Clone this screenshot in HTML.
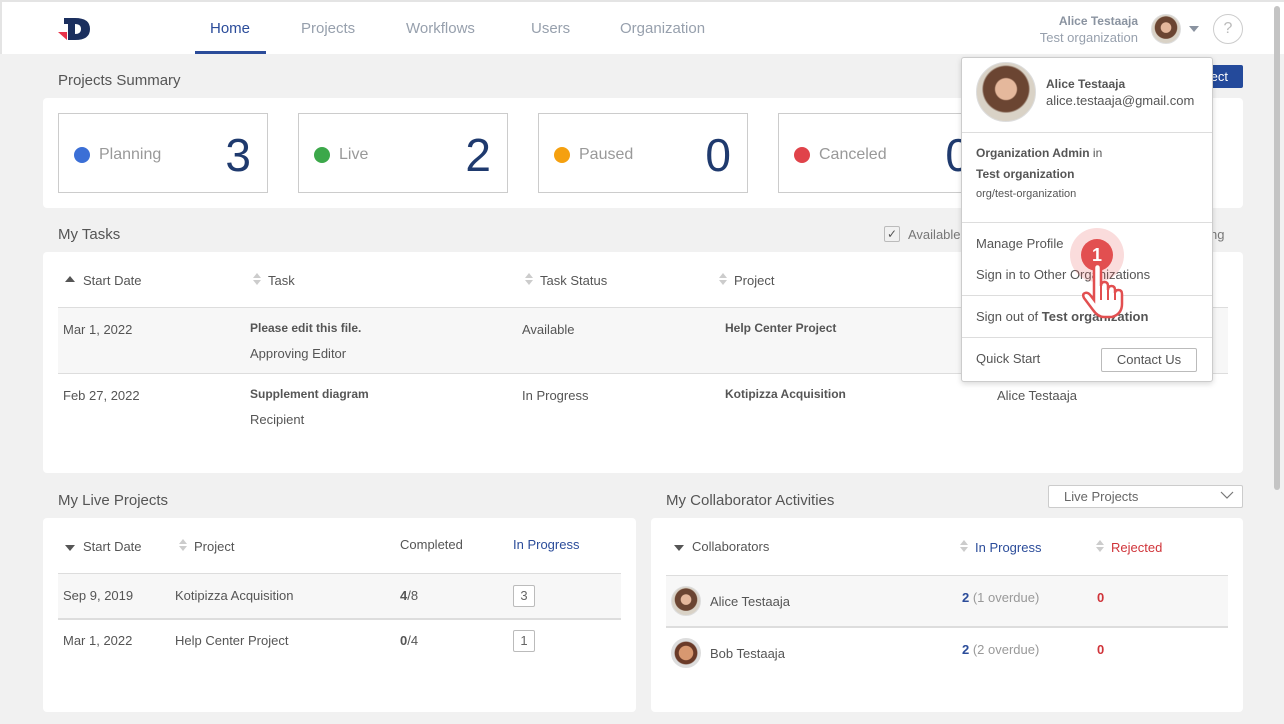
<!DOCTYPE html>
<html><head><meta charset="utf-8"><style>
*{box-sizing:border-box;margin:0;padding:0}
body{width:1284px;height:724px;overflow:hidden;background:#f1f1f1;font-family:"Liberation Sans",sans-serif;color:#555;position:relative;font-size:13px}
.a{position:absolute;white-space:nowrap}
.card{position:absolute;background:#fff;border-radius:4px}
.h2{font-size:15px;color:#555}
.tile{position:absolute;top:113px;width:210px;height:80px;border:1px solid #ccc;background:#fff}
.tile .dot{position:absolute;left:15px;top:33px;width:16px;height:16px;border-radius:50%}
.tile .lbl{position:absolute;left:40px;top:32px;font-size:16px;color:#999}
.tile .num{position:absolute;right:16px;top:14px;font-size:46px;color:#1f3a6e;font-weight:300}
.th{font-size:13px;color:#555}
.sort{display:inline-block;width:9px;height:14px;vertical-align:-2px;margin-right:6px;position:relative}
.sort:before{content:"";position:absolute;left:0;top:0;border:4.5px solid transparent;border-bottom:5px solid #ccc;border-top:0}
.sort:after{content:"";position:absolute;left:0;top:7px;border:4.5px solid transparent;border-top:5px solid #ccc;border-bottom:0}
.up{display:inline-block;border:5px solid transparent;border-bottom:6px solid #555;border-top:0;margin-right:8px;vertical-align:3px}
.dn{display:inline-block;border:5px solid transparent;border-top:6px solid #555;border-bottom:0;margin-right:8px;vertical-align:0}
.line{position:absolute;height:1px;background:#ddd}
b{color:#555}
.box{position:absolute;width:22px;height:22px;border:1px solid #bbb;border-radius:2px;text-align:center;line-height:20px;font-size:13px;color:#666;background:#fff}
.av{position:absolute;border-radius:50%;border:1px solid #ddd;background:radial-gradient(circle at 50% 45%,#e5b89c 0 24%,#6b4532 27% 52%,#d9d2c6 56%)}
</style></head><body>
<!-- header -->
<div class="a" style="left:0;top:0;width:1284px;height:54px;background:#fff;border-top:2px solid #e4e4e4;border-left:2px solid #e4e4e4"></div>
<svg class="a" style="left:56px;top:15px" width="38" height="28" viewBox="0 0 38 28"><polygon points="2,17 11,17 11,25" fill="#e8334a"/><path d="M8 3 H19 Q34 3 34 14 Q34 25 19 25 H12 V9 H8 Z M19 9 V19 Q25 19 25 14 Q25 9 19 9Z" fill="#1b2f5e" fill-rule="evenodd"/></svg>
<div class="a" style="left:210px;top:20px;font-size:15px;color:#2b4c9a">Home</div>
<div class="a" style="left:195px;top:51px;width:71px;height:3px;background:#2b4c9a"></div>
<div class="a" style="left:301px;top:20px;font-size:15px;color:#97a0ad">Projects</div>
<div class="a" style="left:406px;top:20px;font-size:15px;color:#97a0ad">Workflows</div>
<div class="a" style="left:531px;top:20px;font-size:15px;color:#97a0ad">Users</div>
<div class="a" style="left:620px;top:20px;font-size:15px;color:#97a0ad">Organization</div>
<div class="a" style="left:1030px;top:14px;width:108px;text-align:right;font-size:12px;font-weight:bold;color:#8a93a0">Alice Testaaja</div>
<div class="a" style="left:1020px;top:30px;width:118px;text-align:right;font-size:13px;color:#97a0ad">Test organization</div>
<div class="av" style="left:1151px;top:14px;width:30px;height:30px"></div>
<div class="a" style="left:1189px;top:26px;border:5px solid transparent;border-top:6px solid #8a93a0"></div>
<div class="a" style="left:1213px;top:14px;width:30px;height:30px;border:1px solid #ccc;border-radius:50%;text-align:center;line-height:28px;color:#bbb;font-size:16px">?</div>
<div class="a" style="left:1274px;top:6px;width:6px;height:484px;background:#c4c4c4;border-radius:3px"></div>

<!-- projects summary -->
<div class="a h2" style="left:58px;top:72px">Projects Summary</div>
<div class="a" style="left:1140px;top:65px;width:103px;height:23px;background:#244a9b;border-radius:2px;color:#fff;text-align:right;padding-right:15px;line-height:23px">New Project</div>
<div class="card" style="left:43px;top:98px;width:1200px;height:110px"></div>
<div class="tile" style="left:58px"><div class="dot" style="background:#3b6fd6"></div><div class="lbl">Planning</div><div class="num">3</div></div>
<div class="tile" style="left:298px"><div class="dot" style="background:#3ca84a"></div><div class="lbl">Live</div><div class="num">2</div></div>
<div class="tile" style="left:538px"><div class="dot" style="background:#f5a00f"></div><div class="lbl">Paused</div><div class="num">0</div></div>
<div class="tile" style="left:778px"><div class="dot" style="background:#e0434a"></div><div class="lbl">Canceled</div><div class="num">0</div></div>

<!-- my tasks -->
<div class="a h2" style="left:58px;top:226px">My Tasks</div>
<div class="a" style="left:884px;top:226px;width:16px;height:16px;border:1px solid #bbb;border-radius:2px;font-size:12px;line-height:14px;text-align:center;color:#555">✓</div>
<div class="a" style="left:908px;top:227px;color:#777">Available</div>
<div class="a" style="left:1210px;top:227px;color:#777">ng</div>
<div class="card" style="left:43px;top:252px;width:1200px;height:221px"></div>
<div class="a th" style="left:65px;top:273px"><span class="up"></span>Start Date</div>
<div class="a th" style="left:253px;top:273px"><span class="sort"></span>Task</div>
<div class="a th" style="left:525px;top:273px"><span class="sort"></span>Task Status</div>
<div class="a th" style="left:719px;top:273px"><span class="sort"></span>Project</div>
<div class="line" style="left:58px;top:307px;width:1170px"></div>
<div class="a" style="left:58px;top:308px;width:1170px;height:65px;background:#f7f7f7"></div>
<div class="line" style="left:58px;top:373px;width:1170px;background:#ddd"></div>
<div class="a" style="left:63px;top:322px">Mar 1, 2022</div>
<div class="a" style="left:250px;top:321px;font-size:12px;font-weight:bold">Please edit this file.</div>
<div class="a" style="left:250px;top:346px">Approving Editor</div>
<div class="a" style="left:522px;top:322px">Available</div>
<div class="a" style="left:725px;top:321px;font-size:12px;font-weight:bold">Help Center Project</div>
<div class="a" style="left:63px;top:388px">Feb 27, 2022</div>
<div class="a" style="left:250px;top:387px;font-size:12px;font-weight:bold">Supplement diagram</div>
<div class="a" style="left:250px;top:412px">Recipient</div>
<div class="a" style="left:522px;top:388px">In Progress</div>
<div class="a" style="left:725px;top:387px;font-size:12px;font-weight:bold">Kotipizza Acquisition</div>
<div class="a" style="left:997px;top:388px">Alice Testaaja</div>

<!-- live projects -->
<div class="a h2" style="left:58px;top:492px">My Live Projects</div>
<div class="card" style="left:43px;top:518px;width:593px;height:194px"></div>
<div class="a th" style="left:65px;top:539px"><span class="dn"></span>Start Date</div>
<div class="a th" style="left:179px;top:539px"><span class="sort"></span>Project</div>
<div class="a th" style="left:400px;top:537px">Completed</div>
<div class="a th" style="left:513px;top:537px;color:#2b4c9a">In Progress</div>
<div class="line" style="left:58px;top:573px;width:563px"></div>
<div class="a" style="left:58px;top:574px;width:563px;height:44px;background:#f7f7f7"></div>
<div class="line" style="left:58px;top:618px;width:563px;height:2px"></div>
<div class="a" style="left:63px;top:588px">Sep 9, 2019</div>
<div class="a" style="left:175px;top:588px">Kotipizza Acquisition</div>
<div class="a" style="left:400px;top:588px"><b>4</b>/8</div>
<div class="box" style="left:513px;top:585px">3</div>
<div class="a" style="left:63px;top:633px">Mar 1, 2022</div>
<div class="a" style="left:175px;top:633px">Help Center Project</div>
<div class="a" style="left:400px;top:633px"><b>0</b>/4</div>
<div class="box" style="left:513px;top:630px">1</div>

<!-- collaborators -->
<div class="a h2" style="left:666px;top:492px">My Collaborator Activities</div>
<div class="a" style="left:1048px;top:485px;width:195px;height:23px;background:#fff;border:1px solid #ccc;border-radius:2px;padding-left:15px;line-height:21px;color:#666">Live Projects</div>
<svg class="a" style="left:1220px;top:491px" width="14" height="9"><path d="M1 1 L7 7 L13 1" fill="none" stroke="#777" stroke-width="1.2"/></svg>
<div class="card" style="left:651px;top:518px;width:592px;height:194px"></div>
<div class="a th" style="left:674px;top:539px"><span class="dn"></span>Collaborators</div>
<div class="a th" style="left:960px;top:540px;color:#2b4c9a"><span class="sort"></span>In Progress</div>
<div class="a th" style="left:1096px;top:540px;color:#d0343a"><span class="sort"></span>Rejected</div>
<div class="line" style="left:666px;top:575px;width:562px"></div>
<div class="a" style="left:666px;top:576px;width:562px;height:50px;background:#f7f7f7"></div>
<div class="line" style="left:666px;top:626px;width:562px;height:2px"></div>
<div class="av" style="left:671px;top:586px;width:30px;height:30px"></div>
<div class="a" style="left:710px;top:594px">Alice Testaaja</div>
<div class="a" style="left:962px;top:590px;color:#999"><b style="color:#2b4c9a">2</b> (1 overdue)</div>
<div class="a" style="left:1097px;top:590px;color:#d0343a;font-weight:bold">0</div>
<div class="av" style="left:671px;top:638px;width:30px;height:30px;background:radial-gradient(circle at 50% 50%,#d89870 0 35%,#6a3a28 38% 55%,#ddd 60%)"></div>
<div class="a" style="left:710px;top:646px">Bob Testaaja</div>
<div class="a" style="left:962px;top:642px;color:#999"><b style="color:#2b4c9a">2</b> (2 overdue)</div>
<div class="a" style="left:1097px;top:642px;color:#d0343a;font-weight:bold">0</div>

<!-- dropdown -->
<div class="a" style="left:961px;top:57px;width:252px;height:325px;background:#fff;border:1px solid #ccc;border-radius:3px;box-shadow:0 2px 6px rgba(0,0,0,.15)"></div>
<div class="av" style="left:976px;top:62px;width:60px;height:60px"></div>
<div class="a" style="left:1046px;top:77px;font-size:12px;font-weight:bold">Alice Testaaja</div>
<div class="a" style="left:1046px;top:93px;font-size:13px">alice.testaaja@gmail.com</div>
<div class="line" style="left:962px;top:132px;width:250px"></div>
<div class="a" style="left:976px;top:146px;font-size:12px"><b>Organization Admin</b> in</div>
<div class="a" style="left:976px;top:167px;font-size:12px;font-weight:bold">Test organization</div>
<div class="a" style="left:976px;top:188px;font-size:11px">org/test-organization</div>
<div class="line" style="left:962px;top:222px;width:250px"></div>
<div class="a" style="left:976px;top:236px">Manage Profile</div>
<div class="a" style="left:976px;top:267px">Sign in to Other Organizations</div>
<div class="line" style="left:962px;top:295px;width:250px"></div>
<div class="a" style="left:976px;top:309px">Sign out of <b>Test organization</b></div>
<div class="line" style="left:962px;top:337px;width:250px"></div>
<div class="a" style="left:976px;top:351px">Quick Start</div>
<div class="a" style="left:1101px;top:348px;width:96px;height:24px;border:1px solid #bbb;border-radius:2px;text-align:center;line-height:22px">Contact Us</div>

<!-- cursor badge -->
<div class="a" style="left:1070px;top:228px;width:54px;height:54px;border-radius:50%;background:rgba(232,80,80,.2)"></div>
<div class="a" style="left:1081px;top:239px;width:32px;height:32px;border-radius:50%;background:#e24f50;color:#fff;font-weight:bold;font-size:18px;text-align:center;line-height:32px">1</div>
<svg class="a" style="left:1078px;top:262px" width="50" height="60" viewBox="0 0 50 60"><path d="M16 6 Q16 2 19.5 2 Q23 2 23 6 V24 Q23 20 26.5 20 Q30 20 30 24 V28 Q30 24 33.5 24 Q37 24 37 28 V31 Q37 28 40.5 28 Q44 28 44 32 V42 Q44 52 34 55 H26 Q20 55 15 48 L6 36 Q4 32 7 31 Q10 30 13 34 L16 38 Z" fill="#fff" stroke="#e24f50" stroke-width="2.5"/><path d="M23 24 V38 M30 28 V38 M37 31 V38" stroke="#e24f50" stroke-width="2"/></svg>
</body></html>
